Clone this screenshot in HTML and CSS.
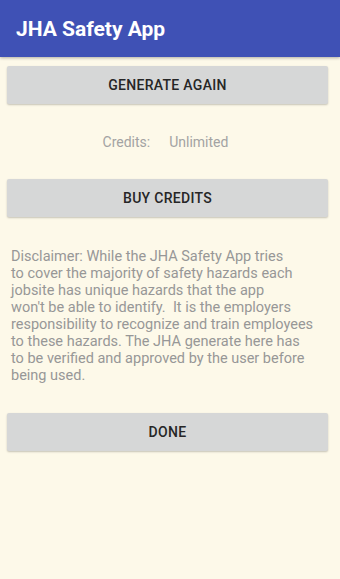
FILE: index.html
```html
<!DOCTYPE html>
<html>
<head>
<meta charset="utf-8">
<link rel="stylesheet" href="styles.css">
</head>
<body>
<div class="appbar"><span class="title">JHA Safety App</span></div>
<main class="content">
  <button class="btn btn-first">GENERATE AGAIN</button>
  <div class="credits"><span class="label">Credits:</span><span class="value">Unlimited</span></div>
  <button class="btn">BUY CREDITS</button>
  <p class="disclaimer">Disclaimer: While the JHA Safety App tries<br>to cover the majority of safety hazards each<br>jobsite has unique hazards that the app<br>won't be able to identify.&nbsp; It is the employers<br>responsibility to recognize and train employees<br>to these hazards. The JHA generate here has<br>to be verified and approved by the user before<br>being used.</p>
  <button class="btn btn-done">DONE</button>
</main>
</body>
</html>
```
FILE: styles.css
```css
html, body {
  margin: 0;
  padding: 0;
}
body {
  width: 340px;
  height: 579px;
  background: #fdf9e9;
  font-family: Roboto, "Liberation Sans", sans-serif;
  overflow: hidden;
}
.appbar {
  height: 57px;
  background: #3f51b5;
  display: flex;
  align-items: center;
  padding-left: 16px;
  box-shadow: 0 1px 3px rgba(0,0,0,0.3);
  position: relative;
}
.title {
  color: #fff;
  font-size: 21px;
  font-weight: 700;
  margin-top: 1px;
}
.content {
  display: flex;
  flex-direction: column;
  padding: 0 12px 0 7px;
}
.btn {
  display: block;
  width: 321px;
  height: 38px;
  border: none;
  border-radius: 2px;
  background: #d6d7d7;
  box-shadow: 0 1px 2px rgba(0,0,0,0.22);
  font-family: Roboto, "Liberation Sans", sans-serif;
  font-weight: 500;
  font-size: 14px;
  color: #262626;
  letter-spacing: 0.3px;
  padding: 0;
}
.btn-first {
  margin-top: 9px;
}
.credits {
  height: 75px;
  display: flex;
  align-items: center;
  justify-content: center;
  font-size: 14px;
  color: #a3a3a3;
  gap: 19px;
  padding-right: 4px;
}
.disclaimer {
  margin: 31px 0 0 4px;
  font-size: 14.5px;
  line-height: 17px;
  color: #979797;
}
.btn-done {
  margin-top: 29px;
}
```
